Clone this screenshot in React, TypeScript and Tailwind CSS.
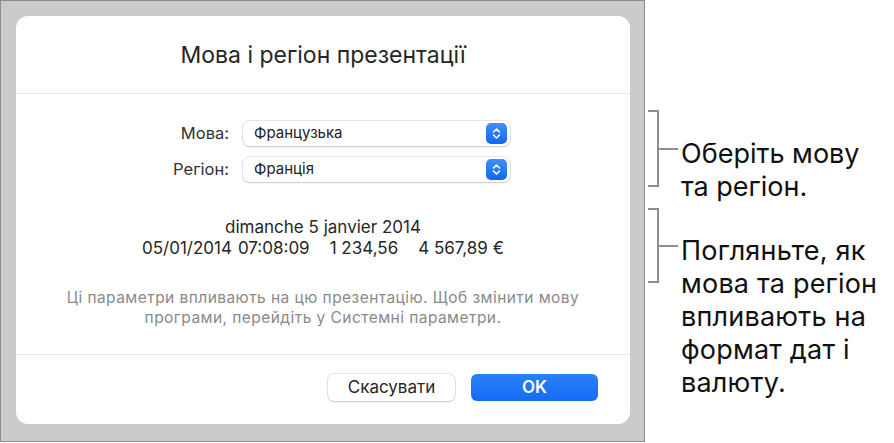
import React from "react";

const dialogFont = "font-['Inter','Noto_Sans',sans-serif]";

function Stepper() {
  return (
    <span className="flex h-[21px] w-[21px] items-center justify-center rounded-[5px] bg-gradient-to-b from-[#3f8ffc] to-[#0d67f2]">
      <svg width="9" height="13" viewBox="0 0 9 13" fill="none">
        <path d="M1.5 5 L4.5 2 L7.5 5" stroke="white" strokeWidth="1.6" strokeLinecap="round" strokeLinejoin="round" />
        <path d="M1.5 8 L4.5 11 L7.5 8" stroke="white" strokeWidth="1.6" strokeLinecap="round" strokeLinejoin="round" />
      </svg>
    </span>
  );
}

function Select({ value }: { value: string }) {
  return (
    <div className="flex h-[25px] w-[267px] items-center justify-between rounded-[6px] bg-white pl-[11px] pr-[3px] text-[15px] text-[#222] shadow-[0_0_0_0.5px_rgba(0,0,0,0.18),0_1px_2px_rgba(0,0,0,0.14)]">
      <span>{value}</span>
      <Stepper />
    </div>
  );
}

function Bracket({ height }: { height: number }) {
  return (
    <div className="flex items-center">
      <div
        className="w-[11px] border-y-2 border-r-2 border-[#8e8e8e]"
        style={{ height }}
      />
      <div className="h-[2px] w-[19px] bg-[#8e8e8e]" />
    </div>
  );
}

export default function App() {
  return (
    <div className="flex h-[443px] w-[894px] bg-white">
      <div className="h-[442px] w-[645px] shrink-0 border border-[#8c8c8c] bg-[#cbcbcb] p-[15px]">
        <div className={`flex h-[408px] w-[614px] flex-col rounded-[12px] bg-white ${dialogFont}`}>
          <header className="flex h-[78px] items-center justify-center border-b border-[#e6e6e6] pt-[1px]">
            <h1 className="text-[23px] text-[#262626]">Мова і регіон презентації</h1>
          </header>

          <div className="flex-1 pt-[27px]">
            <div className="grid grid-cols-[213px_267px] items-center gap-x-[14px] gap-y-[11px] text-[16.5px] text-[#333]">
              <span className="text-right">Мова:</span>
              <Select value="Французька" />
              <span className="text-right">Регіон:</span>
              <Select value="Франція" />
            </div>

            <div className="mt-[35px] flex flex-col items-center text-[17px] leading-[21px] text-[#262626]">
              <span>dimanche 5 janvier 2014</span>
              <div className="flex">
                <span>05/01/2014</span>
                <span className="ml-[6px]">07:08:09</span>
                <span className="ml-[20px]">1 234,56</span>
                <span className="ml-[20px]">4 567,89 €</span>
              </div>
            </div>

            <p className="mt-[29px] text-center text-[15.5px] leading-[20px] tracking-[0.45px] text-[#8a8a8a]">
              Ці параметри впливають на цю презентацію. Щоб змінити мову
              <br />
              програми, перейдіть у Системні параметри.
            </p>
          </div>

          <footer className="flex justify-end gap-[16px] border-t border-[#e6e6e6] pb-[23px] pr-[32px] pt-[19px]">
            <button className="h-[27px] w-[127px] rounded-[6px] bg-white text-[17px] text-[#262626] shadow-[0_0_0_0.5px_rgba(0,0,0,0.18),0_1px_2px_rgba(0,0,0,0.14)]">
              Скасувати
            </button>
            <button className="h-[27px] w-[127px] rounded-[6px] bg-gradient-to-b from-[#2a7ff8] to-[#136cf3] text-[17px] font-semibold text-white">
              OK
            </button>
          </footer>
        </div>
      </div>

      <div className="flex flex-col pl-[3px] pt-[110px] font-['Inter',sans-serif] text-[27px] leading-[33px] text-[#111]">
        <div className="flex items-start">
          <Bracket height={77} />
          <p className="ml-[3px] pt-[27px]">
            Оберіть мову
            <br />
            та регіон.
          </p>
        </div>
        <div className="mt-[5px] flex items-start">
          <Bracket height={75} />
          <p className="ml-[3px] pt-[26px] tracking-[0.2px]">
            Погляньте, як
            <br />
            мова та регіон
            <br />
            впливають на
            <br />
            формат дат і
            <br />
            валюту.
          </p>
        </div>
      </div>
    </div>
  );
}
